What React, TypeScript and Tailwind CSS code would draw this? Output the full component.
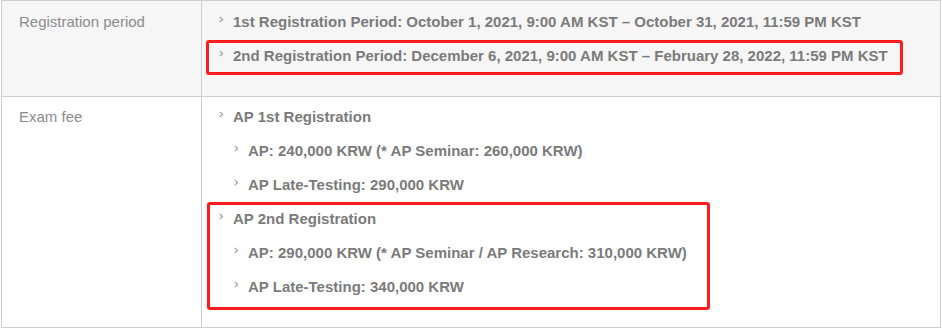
import React from 'react'

const Chevron = () => (
    <svg width="5" height="7" viewBox="0 0 5 7" className="shrink-0 mt-[-5px]">
        <polyline points="0.8,0.8 3.6,3.5 0.8,6.2" fill="none" stroke="#9a9a9a" strokeWidth="1.1" />
    </svg>
)

interface ItemProps {
    children: React.ReactNode
    nested?: boolean
}

const Item: React.FC<ItemProps> = ({ children, nested }) => (
    <div className={`flex items-center gap-[9px] h-5 leading-5 ${nested ? 'pl-[15px]' : ''}`}>
        <Chevron />
        <span className="font-bold text-[15px] text-[#7b7b7b] whitespace-nowrap">{children}</span>
    </div>
)

const Highlight: React.FC<{ className: string }> = ({ className }) => (
    <div className={`absolute border-[3px] border-[#ff1c1c] rounded-[3px] pointer-events-none ${className}`} />
)

export default function App() {
    return (
        <div className="bg-white w-[942px] h-[329px] font-['Liberation_Sans',Arial,sans-serif]">
            <div className="ml-px w-[940px] border border-[#cfcfcf] border-b-0">
                {/* 접수 기간 */}
                <div className="flex bg-[#f6f6f6] border-b border-[#cfcfcf]">
                    <div className="w-[200px] shrink-0 border-r border-[#cfcfcf] pl-[17px] pt-[11px] text-[15px] leading-5 text-[#8c8c8c]">
                        Registration period
                    </div>
                    <div className="flex-1 pl-[17px] pt-[11px] pb-[30px] flex flex-col gap-[14px]">
                        <Item>1st Registration Period: October 1, 2021, 9:00 AM KST – October 31, 2021, 11:59 PM KST</Item>
                        <div className="relative">
                            <Highlight className="left-[-13px] top-[-6px] w-[697px] h-[35px]" />
                            <Item>2nd Registration Period: December 6, 2021, 9:00 AM KST – February 28, 2022, 11:59 PM KST</Item>
                        </div>
                    </div>
                </div>

                {/* 응시료 */}
                <div className="flex border-b border-[#cfcfcf]">
                    <div className="w-[200px] shrink-0 border-r border-[#cfcfcf] pl-[17px] pt-[10px] text-[15px] leading-5 text-[#8c8c8c]">
                        Exam fee
                    </div>
                    <div className="flex-1 pl-[17px] pt-[10px] pb-[30px] flex flex-col gap-[14px]">
                        <Item>AP 1st Registration</Item>
                        <Item nested>AP: 240,000 KRW (* AP Seminar: 260,000 KRW)</Item>
                        <Item nested>AP Late-Testing: 290,000 KRW</Item>
                        <div className="relative flex flex-col gap-[14px]">
                            <Highlight className="left-[-12px] top-[-7px] w-[503px] h-[108px]" />
                            <Item>AP 2nd Registration</Item>
                            <Item nested>AP: 290,000 KRW (* AP Seminar / AP Research: 310,000 KRW)</Item>
                            <Item nested>AP Late-Testing: 340,000 KRW</Item>
                        </div>
                    </div>
                </div>
            </div>
        </div>
    )
}
